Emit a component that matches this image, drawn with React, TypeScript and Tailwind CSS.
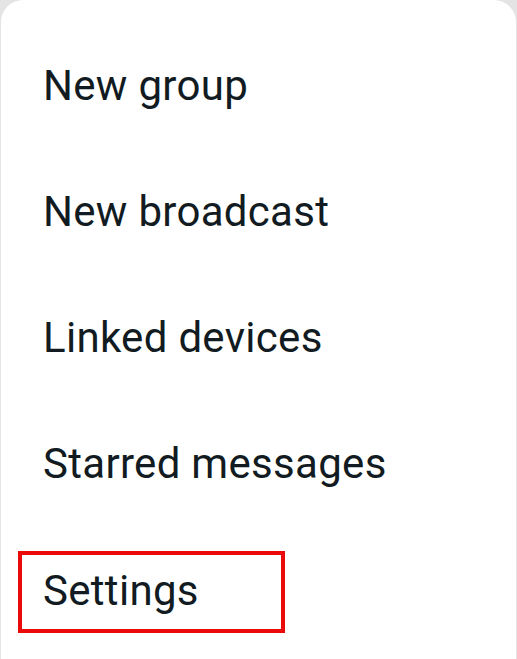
export default function App() {
  const items = ["New group", "New broadcast", "Linked devices", "Starred messages", "Settings"];
  return (
    <div className="w-[517px] h-[659px] bg-[#e4e4e4] overflow-hidden" style={{ fontFamily: "Roboto, 'Noto Sans', sans-serif" }}>
      <div className="ml-px w-[515px] h-[700px] bg-white rounded-t-[22px] pt-[22.5px]">
        {items.map((t, i) => (
          <div key={t} className="h-[126px] flex items-center pl-[42px]">
            {i === 4 ? (
              <div className="-ml-[25px] mt-[5px] h-[82px] w-[267px] border-4 border-[#ea0a0a] flex items-center pl-[21px] pb-[3px]">
                <span className="text-[42px] text-[#111b21] leading-none tracking-[0.3px]">{t}</span>
              </div>
            ) : (
              <span className="text-[42px] text-[#111b21] leading-none tracking-[0.3px]">{t}</span>
            )}
          </div>
        ))}
      </div>
    </div>
  );
}
